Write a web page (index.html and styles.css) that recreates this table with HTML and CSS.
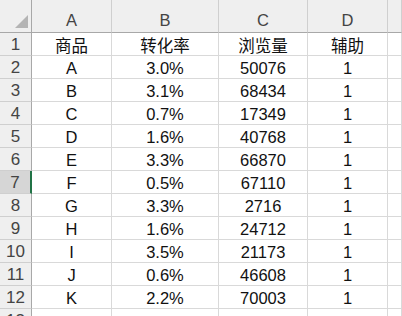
FILE: index.html
```
<!DOCTYPE html>
<html>
<head>
<meta charset="utf-8">
<link rel="stylesheet" href="styles.css">
</head>
<body>
<div class="sheet">
  <div class="corner"><svg width="13" height="13" viewBox="0 0 13 13"><polygon points="13,0 13,13 0,13" fill="#b4b4b4"/></svg></div>
  <div class="colhead">A</div>
  <div class="colhead">B</div>
  <div class="colhead">C</div>
  <div class="colhead">D</div>
  <div class="colhead last"></div>

  <div class="rowhead">1</div><div class="cell">商品</div><div class="cell">转化率</div><div class="cell">浏览量</div><div class="cell">辅助</div><div class="cell"></div>
  <div class="rowhead">2</div><div class="cell">A</div><div class="cell">3.0%</div><div class="cell">50076</div><div class="cell">1</div><div class="cell"></div>
  <div class="rowhead">3</div><div class="cell">B</div><div class="cell">3.1%</div><div class="cell">68434</div><div class="cell">1</div><div class="cell"></div>
  <div class="rowhead">4</div><div class="cell">C</div><div class="cell">0.7%</div><div class="cell">17349</div><div class="cell">1</div><div class="cell"></div>
  <div class="rowhead">5</div><div class="cell">D</div><div class="cell">1.6%</div><div class="cell">40768</div><div class="cell">1</div><div class="cell"></div>
  <div class="rowhead">6</div><div class="cell">E</div><div class="cell">3.3%</div><div class="cell">66870</div><div class="cell">1</div><div class="cell"></div>
  <div class="rowhead active">7</div><div class="cell">F</div><div class="cell">0.5%</div><div class="cell">67110</div><div class="cell">1</div><div class="cell"></div>
  <div class="rowhead">8</div><div class="cell">G</div><div class="cell">3.3%</div><div class="cell">2716</div><div class="cell">1</div><div class="cell"></div>
  <div class="rowhead">9</div><div class="cell">H</div><div class="cell">1.6%</div><div class="cell">24712</div><div class="cell">1</div><div class="cell"></div>
  <div class="rowhead">10</div><div class="cell">I</div><div class="cell">3.5%</div><div class="cell">21173</div><div class="cell">1</div><div class="cell"></div>
  <div class="rowhead">11</div><div class="cell">J</div><div class="cell">0.6%</div><div class="cell">46608</div><div class="cell">1</div><div class="cell"></div>
  <div class="rowhead">12</div><div class="cell">K</div><div class="cell">2.2%</div><div class="cell">70003</div><div class="cell">1</div><div class="cell"></div>
  <div class="rowhead">13</div><div class="cell"></div><div class="cell"></div><div class="cell"></div><div class="cell"></div><div class="cell"></div>
</div>
</body>
</html>
```
FILE: styles.css
```
html, body {
  margin: 0;
  padding: 0;
  background: #ffffff;
  overflow: hidden;
}
.sheet {
  display: grid;
  grid-template-columns: 32px 80px 107px 89px 80px 1fr;
  grid-template-rows: 33px repeat(13, 23px);
  width: 402px;
  font-family: "Liberation Sans", "Noto Sans CJK SC", sans-serif;
  font-size: 16.5px;
  color: #111;
}
.sheet > div {
  box-sizing: border-box;
  display: flex;
  justify-content: center;
  align-items: center;
  overflow: hidden;
  white-space: nowrap;
}
.corner {
  background: #efefef;
  border-right: 1px solid #a8a8a8;
  border-bottom: 1px solid #a8a8a8;
  justify-content: flex-end !important;
  align-items: flex-end !important;
  padding: 0 3px 4px 0;
}
.corner svg { display: block; }
.colhead {
  background: #efefef;
  border-right: 1px solid #cfcfcf;
  border-bottom: 1px solid #a8a8a8;
  color: #444;
  align-items: flex-end !important;
  padding-bottom: 2px;
}
.rowhead {
  background: #efefef;
  border-right: 1px solid #a8a8a8;
  border-bottom: 1px solid #cfcfcf;
  color: #444;
  font-size: 17px;
  padding-top: 2px;
}
.rowhead.active {
  background: #d6d6d6;
  border-right: 2px solid #217346;
}
.cell {
  border-right: 1px solid #d9d9d9;
  border-bottom: 1px solid #d9d9d9;
  padding-top: 2px;
}
```
